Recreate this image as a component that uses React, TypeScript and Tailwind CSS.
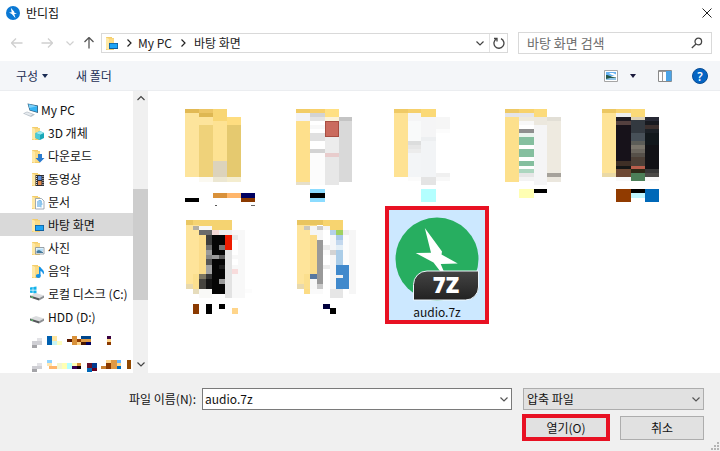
import { ReactNode } from "react";
import clsx from "clsx";

// x, y, width, height, fill
type Block = [number, number, number, number, string];

function Blocks({ blocks }: { blocks: Block[] }) {
  return (
    <g shapeRendering="crispEdges">
      {blocks.map(([x, y, w, h, fill], i) => (
        <rect key={i} x={x} y={y} width={w} height={h} fill={fill} />
      ))}
    </g>
  );
}

const folderA: Block[] = [
  [8, 14, 14, 4, "#e2b954"], [8, 18, 14, 64, "#fde49c"],
  [22, 14, 14, 4, "#ecc565"], [22, 18, 14, 4, "#deb752"], [22, 22, 14, 8, "#fde49c"], [22, 30, 14, 52, "#efd27a"], [22, 82, 14, 5, "#fbf9f1"],
  [36, 14, 14, 12, "#f8d675"], [36, 26, 14, 40, "#fde293"], [36, 66, 14, 16, "#dcd3bc"], [36, 82, 14, 5, "#ece7d2"],
  [50, 22, 14, 8, "#fedd80"], [50, 30, 14, 52, "#e5c96f"], [50, 82, 14, 5, "#f4edcf"],
  [8, 103, 14, 4, "#000000"],
  [36, 98, 14, 5, "#d9913a"], [50, 98, 14, 5, "#ffb66b"], [64, 98, 14, 5, "#000060"], [64, 103, 14, 4, "#8b3a00"],
  [38, 110, 2, 1, "#555555"], [74, 110, 4, 1, "#666666"],
];

const folderB: Block[] = [
  [15, 14, 14, 4, "#f2cc66"], [15, 18, 14, 8, "#f2f2f5"], [15, 26, 14, 61, "#fee08c"], [15, 87, 14, 3, "#e6dfca"],
  [29, 14, 15, 4, "#f8d06b"], [29, 18, 15, 4, "#d3d3d3"], [29, 22, 15, 4, "#e4e4e4"], [29, 30, 15, 4, "#f8f8f8"],
  [29, 38, 15, 8, "#e0e0e0"], [29, 54, 15, 4, "#d3d3d3"], [29, 58, 15, 32, "#fcfcfc"],
  [44, 14, 14, 8, "#ffe083"], [44, 22, 14, 4, "#fbf2d9"], [44, 26, 14, 16, "#a84e42"], [45, 27, 12, 14, "#ca6b5e"],
  [44, 42, 14, 16, "#ececec"], [44, 58, 14, 4, "#e8cccc"], [44, 62, 14, 28, "#e7e7e7"],
  [58, 22, 13, 4, "#c4c4c4"], [58, 26, 13, 61, "#d9d9d9"],
  [29, 94, 15, 4, "#8cdcff"], [29, 98, 15, 5, "#000000"], [29, 103, 15, 4, "#8cdcff"],
];

const folderC: Block[] = [
  [9, 14, 14, 4, "#f0ca65"], [9, 18, 14, 64, "#fee293"],
  [23, 14, 13, 4, "#f6d06c"], [23, 18, 13, 8, "#f5f5f6"], [23, 26, 13, 20, "#f9fafa"], [23, 46, 13, 4, "#dcdddd"],
  [23, 50, 13, 4, "#e6e6e6"], [23, 54, 13, 4, "#ececec"], [23, 58, 13, 24, "#f3f5f7"], [23, 82, 13, 4, "#fbfbfb"],
  [36, 14, 15, 8, "#fbd976"], [36, 22, 15, 20, "#f5f5f6"], [36, 42, 15, 4, "#edeff1"], [36, 46, 15, 36, "#f2f4f6"], [36, 82, 15, 8, "#e4e4e4"],
  [51, 22, 14, 12, "#f6f6f6"], [51, 34, 14, 4, "#fcfcfc"], [51, 78, 14, 4, "#f0f0f0"], [51, 82, 14, 4, "#f8f8f8"],
  [36, 94, 15, 13, "#b3ffff"],
];

const folderD: Block[] = [
  [16, 14, 14, 4, "#eec965"], [16, 18, 14, 4, "#e4e4e8"], [16, 22, 14, 65, "#fde08c"],
  [30, 14, 15, 4, "#f8d26c"], [30, 18, 15, 4, "#e5e5e9"], [30, 22, 15, 4, "#eeeade"], [30, 26, 15, 4, "#f8f8f8"],
  [30, 34, 15, 4, "#8f8f8f"], [30, 38, 15, 4, "#eaf4ee"], [30, 42, 15, 8, "#85bf9f"], [30, 54, 15, 8, "#85bf9f"],
  [30, 66, 15, 5, "#85bf9f"], [30, 74, 15, 4, "#acd6bf"], [30, 78, 15, 4, "#e6e6e6"], [30, 82, 15, 4, "#f3f3f3"],
  [45, 14, 13, 8, "#fcdb7b"], [45, 22, 13, 8, "#ece8de"], [45, 30, 13, 60, "#f5f5f6"],
  [58, 22, 14, 4, "#e2dfd6"], [58, 26, 14, 52, "#eeeae0"], [58, 78, 14, 4, "#a6a29b"], [58, 82, 14, 5, "#ebe7de"],
  [30, 94, 15, 9, "#ffffb3"], [45, 94, 13, 4, "#000000"],
];

const folderE: Block[] = [
  [9, 14, 14, 4, "#ecc762"], [9, 18, 14, 60, "#fee396"], [9, 78, 14, 4, "#ead9a6"],
  [23, 14, 15, 4, "#f8d370"], [23, 18, 15, 4, "#eeeeee"], [23, 22, 15, 4, "#1e1a22"], [23, 26, 15, 4, "#54403f"],
  [23, 30, 15, 36, "#17121a"], [23, 66, 15, 5, "#3e2f26"], [23, 71, 15, 3, "#141616"], [23, 74, 15, 8, "#6d4833"], [23, 82, 15, 4, "#f9f9f9"],
  [38, 14, 14, 8, "#fbda78"], [38, 22, 14, 3, "#dcd0b5"], [38, 25, 14, 13, "#333940"], [38, 38, 14, 8, "#475058"],
  [38, 46, 14, 4, "#5c5d58"], [38, 50, 14, 4, "#7a756b"], [38, 54, 14, 4, "#6b665e"], [38, 58, 14, 4, "#565049"],
  [38, 62, 14, 9, "#4d4037"], [38, 71, 14, 3, "#b85e4c"], [38, 74, 14, 4, "#2e2a18"], [38, 78, 14, 8, "#4c7f58"],
  [52, 22, 14, 4, "#272935"], [52, 26, 14, 4, "#181a20"], [52, 30, 14, 4, "#3c302e"], [52, 34, 14, 4, "#1b2026"],
  [52, 38, 14, 12, "#12181c"], [52, 50, 14, 24, "#121216"], [52, 74, 14, 4, "#383838"], [52, 78, 14, 4, "#4c4a47"], [52, 82, 14, 4, "#f8f8f8"],
  [23, 94, 15, 13, "#913b00"], [38, 94, 14, 4, "#000000"], [38, 98, 14, 5, "#bff5ff"], [52, 94, 14, 13, "#0068b8"],
];

const folderF: Block[] = [
  [9, 14, 7, 5, "#eac763"], [16, 14, 39, 10, "#f5d371"], [9, 19, 13, 59, "#fee49a"], [22, 24, 7, 44, "#fbdc8a"],
  [16, 68, 6, 15, "#fbdf8e"], [9, 78, 7, 5, "#e8d9ae"], [16, 83, 6, 5, "#e6dcbc"], [22, 83, 13, 9, "#f9f9f7"],
  [16, 20, 6, 4, "#b3afa3"], [22, 20, 13, 4, "#f7f7f7"], [22, 24, 13, 5, "#6b6b6b"], [35, 24, 7, 5, "#f3d9d6"], [42, 24, 13, 5, "#eeeeee"],
  [29, 29, 6, 10, "#3c3c3c"], [29, 39, 6, 5, "#6e6e6e"], [29, 44, 6, 5, "#9b9b9b"], [29, 49, 6, 4, "#888888"],
  [29, 53, 6, 6, "#555555"], [29, 59, 6, 9, "#a3a3a3"], [29, 68, 6, 5, "#363636"], [29, 73, 6, 10, "#141414"],
  [22, 68, 7, 5, "#7d7662"], [22, 73, 7, 10, "#46443f"],
  [35, 29, 13, 59, "#050505"], [42, 39, 6, 5, "#777777"], [35, 49, 7, 4, "#9a9a9a"], [42, 49, 6, 4, "#5a5a5a"],
  [42, 59, 6, 4, "#1c1c1c"], [42, 73, 6, 5, "#9a9a9a"],
  [48, 29, 7, 15, "#ee1c00"], [48, 44, 7, 48, "#e3e3e3"],
  [55, 24, 13, 68, "#f8f8f8"], [55, 29, 6, 5, "#e9e9e9"], [55, 34, 6, 15, "#ffffff"], [55, 53, 6, 6, "#ffffff"],
  [55, 63, 6, 5, "#f8dcdc"], [68, 83, 7, 4, "#fcfcfc"],
  [16, 98, 6, 10, "#8b3a00"], [29, 98, 6, 10, "#000000"], [42, 98, 6, 5, "#000000"], [55, 102, 6, 6, "#ffd58a"],
];

const folderG: Block[] = [
  [16, 14, 46, 5, "#e9c560"], [42, 14, 20, 10, "#f7d470"], [16, 19, 13, 59, "#fee49a"], [29, 19, 7, 49, "#fbdc8a"],
  [23, 68, 6, 15, "#fbdf8e"], [16, 78, 7, 5, "#e8d9ae"], [23, 83, 6, 5, "#fcdc85"],
  [23, 20, 6, 4, "#cbc8bc"], [29, 20, 7, 9, "#f5f5f5"], [36, 20, 6, 4, "#cccccc"], [42, 20, 7, 4, "#f5f5f5"],
  [36, 24, 6, 10, "#f5f5f5"], [36, 34, 6, 44, "#999999"], [36, 78, 6, 5, "#c8c8c8"],
  [42, 24, 7, 59, "#ffffff"], [42, 39, 7, 5, "#ececec"], [42, 44, 7, 5, "#fafafa"], [42, 59, 7, 4, "#ececec"],
  [49, 24, 6, 5, "#b5d0ea"], [49, 29, 6, 15, "#f4f6f8"], [49, 44, 6, 5, "#d3d3d3"], [49, 49, 6, 34, "#f6f6f6"],
  [55, 24, 7, 5, "#9fd15f"], [55, 29, 7, 5, "#a9c9e8"], [55, 34, 7, 5, "#c3d8ee"], [55, 39, 7, 5, "#e3eef6"],
  [55, 44, 7, 15, "#abcde8"], [55, 59, 13, 24, "#4089cc"], [55, 69, 7, 3, "#eef0f2"], [49, 83, 13, 9, "#e6e6e6"],
  [62, 24, 6, 5, "#eeeeee"], [62, 29, 6, 30, "#fcfcfc"], [68, 24, 7, 64, "#f6f6f6"],
  [29, 68, 7, 5, "#5878a0"], [29, 73, 7, 10, "#f7f7f7"], [29, 83, 13, 5, "#fafafa"],
  [42, 98, 7, 5, "#00003c"], [49, 102, 6, 6, "#000000"],
];

const hiddenDrives: Block[] = [
  [37, 10, 5, 5, "#e2e2e6"], [32, 13, 10, 4, "#cfcfd4"], [32, 17, 5, 3, "#a4a4a8"],
  [47, 8, 5, 9, "#0060b0"], [52, 8, 5, 5, "#ffe6a0"], [52, 13, 5, 4, "#c8f4f4"], [57, 13, 5, 4, "#ffffc0"],
  [67, 11, 5, 3, "#5a1800"], [72, 8, 5, 9, "#d9913a"], [77, 11, 4, 3, "#913b00"], [77, 14, 4, 3, "#ffd58a"],
  [81, 8, 10, 3, "#00468c"], [81, 11, 10, 3, "#e09a45"], [81, 14, 5, 3, "#4a1800"], [86, 14, 5, 3, "#000060"],
  [107, 8, 4, 3, "#380040"], [107, 11, 4, 3, "#ffd58a"], [107, 14, 4, 3, "#8b3a00"],
  [37, 35, 5, 4, "#e2e2e6"], [32, 38, 10, 3, "#cfcfd4"], [32, 41, 5, 3, "#a4a4a8"],
  [47, 32, 5, 3, "#90d4ff"], [47, 35, 5, 3, "#ffe6b0"], [49, 38, 8, 3, "#ffb66b"], [57, 35, 5, 6, "#f2f6d0"],
  [62, 35, 5, 6, "#ffffb3"], [67, 35, 5, 6, "#b3ffff"], [72, 38, 5, 3, "#3a0050"], [72, 35, 5, 3, "#ffffb3"],
  [77, 35, 4, 3, "#d9913a"], [77, 38, 4, 3, "#14000a"],
  [87, 35, 5, 5, "#66102a"], [92, 35, 5, 5, "#003a90"], [87, 40, 5, 4, "#0068b8"], [92, 40, 5, 3, "#660020"],
  [101, 38, 5, 3, "#c98030"], [106, 35, 5, 6, "#8b3a00"], [106, 32, 5, 3, "#ffd58a"], [111, 32, 6, 9, "#e09a45"],
  [117, 32, 4, 3, "#66b6ff"], [117, 35, 4, 3, "#ffd58a"], [117, 38, 4, 3, "#0068b8"], [127, 32, 4, 9, "#914800"],
];

function FolderIcon({ children }: { children?: ReactNode }) {
  return (
    <svg viewBox="0 0 16 16" className="size-4 shrink-0" aria-hidden="true">
      <path d="M2 2h6v1h2v12H2z" fill="#f3cd6c" />
      <path d="M2 2.500l3 1.200V15l-3-1z" fill="#ffe9a6" />
      <path d="M5 3.500h5V14H5z" fill="#fbdb85" />
      {children}
    </svg>
  );
}

function DesktopIcon() {
  return (
    <FolderIcon>
      <path d="M5 8h9v6H5z" fill="#0f5f9e" />
      <path d="M5.800 8.800h7.400v4.200H5.800z" fill="#1ea3f5" />
    </FolderIcon>
  );
}

function PcIcon() {
  return (
    <svg viewBox="0 0 16 16" className="size-4 shrink-0" aria-hidden="true">
      <path d="M4.500 1.500L15 3.500V11L6.500 8.500z" fill="#35617f" />
      <path d="M5.500 2.300l8.700 2v5.700L7 8z" fill="#35b4f4" />
      <path d="M5.500 2.300l8.700 2L6.300 6z" fill="#7fd0f8" />
      <path d="M0 11.500l4-2 8 3-4 2.500z" fill="#b9c2ca" />
      <path d="M1.500 11.500l2.500-1.200 5.500 2-2 1.500z" fill="#e6eaee" />
    </svg>
  );
}

function DriveIcon({ windows }: { windows?: boolean }) {
  return (
    <svg viewBox="0 0 16 16" className="size-4 shrink-0" aria-hidden="true">
      {windows && (
        <path d="M0 1.500l2.700-.4v2.700H0zM3.300 1l3.200-.5v3.300H3.300zM0 4.400h2.700v2.700L0 6.700zM3.300 4.400h3.200v3.300l-3.200-.5z" fill="#12b1ea" />
      )}
      <path d="M0 9.500L6 7l8 2.500-5 2.800z" fill="#dcdddf" />
      <path d="M0 9.500l9 2.800V14.500l-9-3z" fill="#55585b" />
      <path d="M9 12.300l5-2.800v2.300l-5 2.700z" fill="#8d9093" />
      <path d="M1 10.800l2 .6" stroke="#5ce06c" strokeWidth="1" />
    </svg>
  );
}

function Chevron({ dir, className }: { dir: "up" | "down" | "right"; className?: string }) {
  const d = { up: "M1.500 7L5 3.500 8.500 7", down: "M1.500 3.500L5 7l3.500-3.500", right: "M3.500 1.500L7 5 3.500 8.500" }[dir];
  return (
    <svg viewBox="0 0 10 10" className={clsx("size-2.5 shrink-0", className)} fill="none" stroke="currentColor" strokeWidth="1.200" aria-hidden="true">
      <path d={d} />
    </svg>
  );
}

function Arrow({ rotate }: { rotate?: string }) {
  return (
    <svg viewBox="0 0 12 12" className={clsx("size-3", rotate)} fill="none" stroke="currentColor" strokeWidth="1.300" aria-hidden="true">
      <path d="M0.500 6h11M5 1.500L0.500 6 5 10.500" />
    </svg>
  );
}

const places: { label: string; icon: ReactNode; root?: boolean; active?: boolean }[] = [
  { label: "My PC", icon: <PcIcon />, root: true },
  {
    label: "3D 개체",
    icon: (
      <FolderIcon>
        <path d="M5.500 8L10 6l4 2v5l-4 2-4.500-2z" fill="#18a7b8" />
        <path d="M5.500 8L10 6l4 2-4 1.800z" fill="#9be9f0" />
        <path d="M5.500 8l4.500 1.800V15l-4.500-2z" fill="#4ccbd8" />
      </FolderIcon>
    ),
  },
  {
    label: "다운로드",
    icon: (
      <FolderIcon>
        <path d="M8 6h4v4h2.500L10 14.500 5.500 10H8z" fill="#2b7cd0" />
      </FolderIcon>
    ),
  },
  {
    label: "동영상",
    icon: (
      <FolderIcon>
        <path d="M5.500 4H14v11H5.500z" fill="#2d2d33" />
        <path d="M8 5h3.500v4H8z" fill="#5b8fe0" />
        <path d="M8 10h3.500v4H8z" fill="#e38a4a" />
        <path d="M6.600 5v10M13 5v10" stroke="#eee" strokeWidth="1" strokeDasharray="1 1" />
      </FolderIcon>
    ),
  },
  {
    label: "문서",
    icon: (
      <FolderIcon>
        <path d="M5.500 4.500h6l2.500 2.500v8H5.500z" fill="#fff" stroke="#8a98a5" strokeWidth=".8" />
        <path d="M7 8h5M7 10h5.500M7 12h4" stroke="#3f9be0" strokeWidth="1" />
        <path d="M8.500 6.500h2.500v7" stroke="#79bdec" strokeWidth="1" fill="none" />
      </FolderIcon>
    ),
  },
  { label: "바탕 화면", icon: <DesktopIcon />, active: true },
  {
    label: "사진",
    icon: (
      <FolderIcon>
        <path d="M5.500 7.500H14v6.500H5.500z" fill="#fff" stroke="#7e8a94" strokeWidth=".8" />
        <path d="M6.500 8.500H13v2.500H6.500z" fill="#b5def8" />
        <path d="M6.500 13v-2l2.500-1 4 2v1z" fill="#447b9e" />
      </FolderIcon>
    ),
  },
  {
    label: "음악",
    icon: (
      <FolderIcon>
        <path d="M9 4h1.500c.5 2 3.500 2.500 3.500 5.500 0 1-.5 1.500-1 2 0-2-1-3-2.500-3.500V13H9z" fill="#1592e6" />
        <ellipse cx="8.300" cy="13" rx="2.500" ry="2" fill="#1592e6" />
      </FolderIcon>
    ),
  },
  { label: "로컬 디스크 (C:)", icon: <DriveIcon windows /> },
  { label: "HDD (D:)", icon: <DriveIcon /> },
];

function TitleBar() {
  return (
    <header className="flex h-[25px] items-center bg-white pl-1.5 pr-2">
      <svg viewBox="0 0 14 14" className="mr-1.5 size-3.5" aria-hidden="true">
        <circle cx="7" cy="7" r="7" fill="#0a78d4" />
        <path d="M4.800 1.800L8.300 5.800 8.100 6.600 11 7.800 8.300 8l1.200 4.200L5.800 8 3 6.500l2.700-.2z" fill="#fff" />
      </svg>
      <h1 className="flex-1">반디집</h1>
      <button type="button" aria-label="닫기">
        <svg viewBox="0 0 10 10" className="size-2.5" stroke="#222" strokeWidth="1" aria-hidden="true">
          <path d="M0.500 0.500l9 9M9.500 0.500l-9 9" />
        </svg>
      </button>
    </header>
  );
}

function AddressBar() {
  return (
    <nav className="flex h-9 items-center bg-white pl-[11px] pr-2">
      <div className="flex w-[90px] shrink-0 items-center text-[#d0d0d0]">
        <button type="button" aria-label="뒤로"><Arrow /></button>
        <button type="button" aria-label="앞으로" className="ml-[18px]"><Arrow rotate="rotate-180" /></button>
        <button type="button" aria-label="최근 위치" className="ml-3"><Chevron dir="down" /></button>
        <button type="button" aria-label="위로" className="ml-2 text-[#555555]"><Arrow rotate="rotate-90" /></button>
      </div>
      <div className="flex h-5 flex-1 items-center border border-[#d9d9d9] text-[#222222]">
        <span className="ml-0.5"><DesktopIcon /></span>
        <Chevron dir="right" className="ml-1" />
        <a href="#pc" className="ml-1">My PC</a>
        <Chevron dir="right" className="ml-1.5" />
        <a href="#desktop" className="ml-1.5">바탕 화면</a>
        <button type="button" aria-label="이전 위치" className="ml-auto mr-1 text-[#444444]"><Chevron dir="down" /></button>
        <button type="button" aria-label="새로 고침" className="flex h-full w-[18px] items-center justify-center border-l border-[#e2e2e2]">
          <svg viewBox="0 0 12 12" className="size-3" fill="none" stroke="#444" strokeWidth="1.300" aria-hidden="true">
            <path d="M8 1.700A5 5 0 1 1 3.500 1.900" />
            <path d="M1 1.500h3v3" />
          </svg>
        </button>
      </div>
      <label className="ml-2.5 flex h-[22px] w-[194px] items-center border border-[#d9d9d9] px-2">
        <input type="search" aria-label="검색" placeholder="바탕 화면 검색" className="w-full min-w-0 flex-1 text-[13px] outline-none placeholder:text-[#6d6d6d]" />
        <svg viewBox="0 0 12 12" className="size-3" fill="none" stroke="#444" strokeWidth="1.300" aria-hidden="true">
          <circle cx="7.300" cy="4.500" r="3.300" />
          <path d="M5 7L0.800 11" />
        </svg>
      </label>
    </nav>
  );
}

function Toolbar() {
  return (
    <div className="flex h-[30px] items-center border-b border-[#ebedf0] bg-[#f4f6f9] pl-4 pr-3 text-[#1e2f55]">
      <button type="button" className="flex items-center gap-1">
        구성
        <svg viewBox="0 0 6 4" className="h-1 w-1.5" aria-hidden="true"><path d="M0 0h6L3 4z" fill="#1a2c54" /></svg>
      </button>
      <button type="button" className="ml-7">새 폴더</button>
      <button type="button" aria-label="보기" className="ml-auto flex items-center gap-3">
        <svg viewBox="0 0 14 12" className="h-3 w-3.5" aria-hidden="true">
          <path d="M.5.5h13v11H.5z" fill="#fff" stroke="#a5a5a5" />
          <path d="M2 2h10v4H2z" fill="#67b2f2" />
          <path d="M5 3h4l3 1.500v2L7 4.500z" fill="#fff" />
          <path d="M2 5c3 0 5 2 10 2.500V9H2z" fill="#25584c" />
          <path d="M2 9l4-1h6v2H2z" fill="#8fc4e6" />
        </svg>
        <svg viewBox="0 0 6 4" className="h-1 w-1.5" aria-hidden="true"><path d="M0 0h6L3 4z" fill="#1a1a3c" /></svg>
      </button>
      <button type="button" aria-label="미리 보기 창" className="ml-[22px]">
        <svg viewBox="0 0 14 12" className="h-3 w-3.5" aria-hidden="true">
          <path d="M.5.5h13v11H.5z" fill="#fff" stroke="#8a8a8a" />
          <path d="M1 1.500h12M4.500 2v9" stroke="#999" />
          <path d="M8 1h5.500v10H8z" fill="#4ba3e6" />
        </svg>
      </button>
      <button type="button" aria-label="도움말" className="ml-5">
        <svg viewBox="0 0 16 16" className="size-4" aria-hidden="true">
          <circle cx="8" cy="8" r="7.500" fill="#0565c4" stroke="#0a4d94" />
          <text x="8" y="12.500" textAnchor="middle" fontSize="12" fontWeight="600" fill="#fff" fontFamily="Open Sans">?</text>
        </svg>
      </button>
    </div>
  );
}

function Sidebar() {
  return (
    <aside className="flex w-[148px] shrink-0 bg-white">
      <div className="min-w-0 flex-1 overflow-hidden pt-[7px]">
        <ul>
          {places.map((place) => (
            <li key={place.label}>
              <a
                href="#place"
                className={clsx(
                  "flex h-[23px] items-center gap-0.5 whitespace-nowrap",
                  place.root ? "pl-[23px]" : "pl-[30px]",
                  place.active && "bg-[#d9d9d9]",
                )}
              >
                {place.icon}
                {place.label}
              </a>
            </li>
          ))}
        </ul>
        <svg viewBox="0 0 133 44" className="h-11 w-[133px]" aria-hidden="true">
          <Blocks blocks={hiddenDrives} />
        </svg>
      </div>
      <div className="flex w-[15px] flex-col items-center bg-[#f0f0f0] py-0.5 text-[#444444]">
        <Chevron dir="up" />
        <div className="mt-[86px] h-[111px] w-full bg-[#cdcdcd]" />
        <Chevron dir="down" className="mb-0.5 mt-auto" />
      </div>
    </aside>
  );
}

function FolderTile({ name, blocks }: { name: string; blocks: Block[] }) {
  return (
    <button type="button" aria-label={name} className="w-[104px]">
      <svg viewBox="0 0 104 111" className="h-[111px] w-[104px]" aria-hidden="true">
        <Blocks blocks={blocks} />
      </svg>
    </button>
  );
}

function ArchiveTile() {
  return (
    <button type="button" className="flex h-[118px] w-[104px] flex-col items-center border-4 border-[#e81123] bg-[#cce8ff] pt-[7px]">
      <svg viewBox="0 0 84 84" className="size-[84px]" aria-hidden="true">
        <defs>
          <linearGradient id="badge" x1="0" y1="0" x2="0" y2="1">
            <stop offset="0" stopColor="#444" />
            <stop offset="1" stopColor="#222" />
          </linearGradient>
        </defs>
        <circle cx="42" cy="42" r="41.500" fill="#27ae60" />
        <path d="M29.800 11L47 34.500 46.500 37.500 62.800 46.500 45.700 47 49.500 56H46.500L38.500 45.500 20.700 36 36 35.700z" fill="#fff" />
        <path d="M32 54h51.500v16a13 13 0 0 1-13 13H18.500V67.500A13.500 13.500 0 0 1 32 54z" fill="url(#badge)" stroke="#eef7fd" strokeWidth="1" />
        <text x="51" y="76" textAnchor="middle" fontSize="22" fontWeight="800" fill="#fff" fontFamily="Open Sans">7Z</text>
      </svg>
      <span className="mt-[3px]">audio.7z</span>
    </button>
  );
}

function Footer() {
  return (
    <footer className="relative h-[78px] bg-[#f0f0f0] pr-4 pt-[15px]">
      <div className="flex items-center">
        <label htmlFor="file-name" className="w-[202px] pr-1.5 text-right">파일 이름(N):</label>
        <div className="flex h-[22px] flex-1 items-center border border-[#7a7a7a] bg-white pl-0.5 pr-0.5">
          <input id="file-name" defaultValue="audio.7z" className="min-w-0 flex-1 outline-none" />
          <button type="button" aria-label="파일 목록" className="text-[#555555]"><Chevron dir="down" /></button>
        </div>
        <div className="relative ml-[11px] w-[181px]">
          <select aria-label="파일 형식" className="h-[22px] w-full appearance-none border border-[#adadad] bg-[#e1e1e1] pl-[3px]">
            <option>압축 파일</option>
          </select>
          <Chevron dir="down" className="pointer-events-none absolute right-[3px] top-1.5 text-[#555555]" />
        </div>
      </div>
      <div className="mt-1 flex items-center justify-end gap-2.5">
        <button type="button" className="h-[27px] w-[88px] border-4 border-[#e81123] bg-[#e1e1e1] leading-none">열기(O)</button>
        <button type="button" className="h-6 w-[84px] border border-[#adadad] bg-[#e1e1e1] leading-none">취소</button>
      </div>
      <svg viewBox="0 0 9 9" className="absolute bottom-0 right-0 size-[9px]" fill="#b4b4b4" aria-hidden="true">
        <path d="M6 0h2v2H6zM6 3h2v2H6zM6 6h2v2H6zM3 3h2v2H3zM3 6h2v2H3zM0 6h2v2H0z" />
      </svg>
    </footer>
  );
}

export default function App() {
  return (
    <div className="flex h-screen flex-col bg-white font-['Noto_Sans_CJK_KR','Noto_Sans',sans-serif] text-xs text-[#111111]">
      <TitleBar />
      <AddressBar />
      <Toolbar />
      <main className="flex min-h-0 flex-1">
        <Sidebar />
        <section className="flex flex-1 flex-wrap content-start items-start overflow-hidden pl-[29px] pt-1">
          <FolderTile name="폴더 1" blocks={folderA} />
          <FolderTile name="폴더 2" blocks={folderB} />
          <FolderTile name="폴더 3" blocks={folderC} />
          <FolderTile name="폴더 4" blocks={folderD} />
          <FolderTile name="폴더 5" blocks={folderE} />
          <FolderTile name="폴더 6" blocks={folderF} />
          <FolderTile name="폴더 7" blocks={folderG} />
          <ArchiveTile />
        </section>
      </main>
      <Footer />
    </div>
  );
}
